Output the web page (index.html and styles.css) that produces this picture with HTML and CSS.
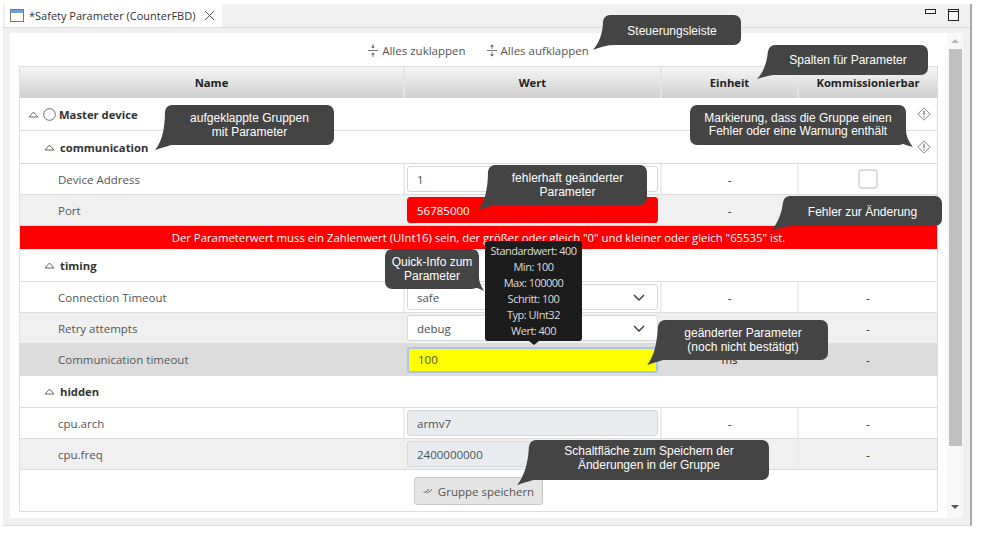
FILE: index.html
```html
<!DOCTYPE html>
<html>
<head>
  <meta charset="utf-8">
  <title>Safety Parameter</title>
  <link rel="stylesheet" href="styles.css">
</head>
<body>
<div class="window">
  <div class="tabbar">
    <div class="tab">
      <svg class="tab-icon" width="14" height="13" viewBox="0 0 14 13"><rect x="0.5" y="0.5" width="13" height="12" fill="#fdfdf6" stroke="#7c7c6c"/><rect x="1" y="1" width="12" height="3" fill="#6f9fd8"/></svg>
      <span>*Safety Parameter (CounterFBD)</span>
      <svg class="tab-close" width="11" height="11" viewBox="0 0 11 11"><path d="M1 1l9 9M10 1l-9 9" stroke="#555" fill="none"/></svg>
    </div>
    <div class="tabbar-tools">
      <svg width="11" height="5" viewBox="0 0 11 5"><rect x="0.5" y="0.5" width="10" height="4" fill="#f8f8f8" stroke="#222"/></svg>
      <svg width="11" height="12" viewBox="0 0 11 12"><rect x="0.5" y="0.5" width="10" height="11" fill="#f8f8f8" stroke="#222"/><path d="M0 2.5h11" stroke="#222"/></svg>
    </div>
  </div>

  <div class="panel">
    <div class="content">
      <div class="toolbar">
        <a class="tool">
          <svg width="10" height="13" viewBox="0 0 10 13"><path d="M0 6.5h10" stroke="#777"/><path d="M5 0v3M5 10v3" stroke="#777"/><path d="M3 2.5l2 2 2-2zM3 10.5l2-2 2 2z" fill="#555"/></svg>
          Alles zuklappen
        </a>
        <a class="tool">
          <svg width="10" height="13" viewBox="0 0 10 13"><path d="M0 6.5h10" stroke="#777"/><path d="M5 2v3M5 8v3" stroke="#777"/><path d="M3 2.5l2-2 2 2zM3 10.5l2 2 2-2z" fill="#555"/></svg>
          Alles aufklappen
        </a>
      </div>

      <div class="params">
        <div class="row header">
          <div class="cell">Name</div>
          <div class="cell">Wert</div>
          <div class="cell">Einheit</div>
          <div class="cell">Kommissionierbar</div>
        </div>

        <div class="group top-group">
          <svg class="caret" width="11" height="7" viewBox="0 0 11 7"><path d="M5.5 1L10 6H1z" fill="none" stroke="#666"/></svg>
          <svg class="radio" width="13" height="13" viewBox="0 0 13 13"><circle cx="6.5" cy="6.5" r="5.8" fill="#fff" stroke="#667"/></svg>
          <b>Master device</b>
          <svg class="warn" width="14" height="14" viewBox="0 0 14 14"><path d="M7 .8L13.2 7 7 13.2 .8 7z" fill="#fff" stroke="#888"/><path d="M7 3.5v4.5M7 9.2v1.3" stroke="#666" stroke-width="1.2"/></svg>
        </div>
        <div class="group">
          <svg class="caret" width="11" height="7" viewBox="0 0 11 7"><path d="M5.5 1L10 6H1z" fill="none" stroke="#666"/></svg>
          <b>communication</b>
          <svg class="warn" width="14" height="14" viewBox="0 0 14 14"><path d="M7 .8L13.2 7 7 13.2 .8 7z" fill="#fff" stroke="#888"/><path d="M7 3.5v4.5M7 9.2v1.3" stroke="#666" stroke-width="1.2"/></svg>
        </div>
        <div class="row">
          <div class="cell name">Device Address</div>
          <div class="cell value"><div class="field">1</div></div>
          <div class="cell">-</div>
          <div class="cell"><span class="checkbox"></span></div>
        </div>
        <div class="row alt">
          <div class="cell name">Port</div>
          <div class="cell value"><div class="field field-error">56785000</div></div>
          <div class="cell">-</div>
          <div class="cell"></div>
        </div>
        <div class="error-row">Der Parameterwert muss ein Zahlenwert (UInt16) sein, der größer oder gleich "0" und kleiner oder gleich "65535" ist.</div>

        <div class="group">
          <svg class="caret" width="11" height="7" viewBox="0 0 11 7"><path d="M5.5 1L10 6H1z" fill="none" stroke="#666"/></svg>
          <b>timing</b>
        </div>
        <div class="row">
          <div class="cell name">Connection Timeout</div>
          <div class="cell value"><div class="field field-select">safe
            <svg width="12" height="7" viewBox="0 0 12 7"><path d="M1 1l5 5 5-5" fill="none" stroke="#444" stroke-width="1.5"/></svg></div></div>
          <div class="cell">-</div>
          <div class="cell">-</div>
        </div>
        <div class="row alt">
          <div class="cell name">Retry attempts</div>
          <div class="cell value"><div class="field field-select">debug
            <svg width="12" height="7" viewBox="0 0 12 7"><path d="M1 1l5 5 5-5" fill="none" stroke="#444" stroke-width="1.5"/></svg></div></div>
          <div class="cell">-</div>
          <div class="cell">-</div>
        </div>
        <div class="row hover">
          <div class="cell name">Communication timeout</div>
          <div class="cell value"><div class="field field-changed">100</div></div>
          <div class="cell">ms</div>
          <div class="cell">-</div>
        </div>

        <div class="group group-short">
          <svg class="caret" width="11" height="7" viewBox="0 0 11 7"><path d="M5.5 1L10 6H1z" fill="none" stroke="#666"/></svg>
          <b>hidden</b>
        </div>
        <div class="row">
          <div class="cell name">cpu.arch</div>
          <div class="cell value"><div class="field field-off">armv7</div></div>
          <div class="cell">-</div>
          <div class="cell">-</div>
        </div>
        <div class="row alt">
          <div class="cell name">cpu.freq</div>
          <div class="cell value"><div class="field field-off">2400000000</div></div>
          <div class="cell">-</div>
          <div class="cell">-</div>
        </div>
        <div class="footer">
          <button class="save">
            <svg width="10" height="6" viewBox="0 0 10 6"><path d="M.5 3l2 2 3-4M4 4.5l.5.5 4.5-3.5" fill="none" stroke="#666"/></svg>
            Gruppe speichern
          </button>
        </div>
      </div>
    </div>

    <div class="scrollbar">
      <span class="arrow-up"></span>
      <div class="thumb"></div>
      <span class="arrow-down"></span>
    </div>
  </div>
</div>

<!-- quick info -->
<div class="quickinfo">
  <div>Standardwert: 400</div>
  <div>Min: 100</div>
  <div>Max: 100000</div>
  <div>Schritt: 100</div>
  <div>Typ: UInt32</div>
  <div>Wert: 400</div>
</div>

<!-- callouts, tail is drawn from the box to the thing it points at -->
<div class="callout c-toolbar">Steuerungsleiste
  <svg class="tail" width="30" height="36" viewBox="0 0 30 36"><path d="M10 6C10 18 6 28 0 35C7 32 14 30 22 30V6z"/></svg></div>
<div class="callout c-columns">Spalten für Parameter
  <svg class="tail" width="30" height="36" viewBox="0 0 30 36"><path d="M11 6C10 18 6 28 0 34C7 32 14 30 22 29V6z"/></svg></div>
<div class="callout c-groups">aufgeklappte Gruppen<br>mit Parameter
  <svg class="tail" width="30" height="46" viewBox="0 0 30 46"><path d="M10 6C10 26 6 38 0 45C7 43 14 40 22 39V6z"/></svg></div>
<div class="callout c-marker">Markierung, dass die Gruppe einen<br>Fehler oder eine Warnung enthält
  <svg class="tail" width="20" height="46" viewBox="0 0 20 46"><path d="M0 25V39H8C11 40 14 41 18 42C15 38 11 32 11 25z"/></svg></div>
<div class="callout c-badvalue">fehlerhaft geänderter<br>Parameter
  <svg class="tail" width="30" height="46" viewBox="0 0 30 46"><path d="M10 6C10 26 6 38 0 45C7 43 14 40 22 40V6z"/></svg></div>
<div class="callout c-error">Fehler zur Änderung
  <svg class="tail" width="30" height="36" viewBox="0 0 30 36"><path d="M12 6C11 18 6 28 0 35C7 33 14 30 22 30V6z"/></svg></div>
<div class="callout c-info">Quick-Info zum<br>Parameter
  <svg class="tail" width="14" height="44" viewBox="0 0 14 44"><path d="M0 28V39H3C6 40 8 41 10 42C8 38 5 34 5 28z"/></svg></div>
<div class="callout c-changed">geänderter Parameter<br>(noch nicht bestätigt)
  <svg class="tail" width="30" height="46" viewBox="0 0 30 46"><path d="M11 6C10 26 6 38 0 45C7 43 14 40 22 39V6z"/></svg></div>
<div class="callout c-save">Schaltfläche zum Speichern der<br>Änderungen in der Gruppe
  <svg class="tail" width="30" height="46" viewBox="0 0 30 46"><path d="M12 6C11 26 6 38 0 45C7 43 14 40 22 39V6z"/></svg></div>
</body>
</html>
```

FILE: styles.css
```css
body {
  margin: 0;
  background: white;
  font-family: "Open Sans", "Liberation Sans", sans-serif;
  font-size: 11.5px;
  color: #444;
}

/* Outer view frame */
.window {
  margin: 4px 0 0 3px;
  width: 967px;
  height: 521px;
  display: flex;
  flex-direction: column;
  background: #f0f0f0;
  border-right: 2px solid #a8a8a8;
  border-bottom: 1px solid #ddd;
}

.tabbar {
  height: 23px;
  display: flex;
  justify-content: space-between;
  border-bottom: 1px solid #ddd;
  padding-left: 2px;
}

.tab {
  width: 217px;
  height: 23px;
  box-sizing: border-box;
  background: white;
  display: flex;
  align-items: center;
  padding-left: 5px;
  color: #333;
  font-size: 11px;
  white-space: nowrap;
}

.tab-icon { margin-right: 5px; }
.tab-close { margin-left: 9px; }

.tabbar-tools {
  display: flex;
  align-items: flex-start;
  gap: 12px;
  padding: 5px 11px 0 0;
}

.panel {
  flex: 1;
  display: flex;
  margin: 5px 7px 7px 7px;
  background: white;
}

.content {
  width: 937px;
  padding-left: 9px;
  box-sizing: border-box;
}

/* Collapse / expand links */
.toolbar {
  width: 919px;
  height: 33px;
  box-sizing: border-box;
  padding-top: 2px;
  display: flex;
  justify-content: center;
  align-items: center;
  gap: 21px;
  color: #555;
}

.tool {
  display: flex;
  align-items: center;
  gap: 4px;
}

.params {
  width: 919px;
  border: 1px solid #ddd;
  box-sizing: border-box;
}

.row {
  display: grid;
  grid-template-columns: 385px 257px 137px 138px;
  height: 31px;
  border-bottom: 1px solid #ddd;
  box-sizing: border-box;
}

.cell {
  display: flex;
  align-items: center;
  justify-content: center;
  border-right: 2px solid #eee;
  color: #222;
}

.cell:last-child { border-right: none; }

.header {
  height: 31px;
  border-bottom: none;
  background: linear-gradient(#f6f6f6, #cfcfcf);
  font-weight: bold;
  font-size: 11.25px;
}

.header .cell { color: #222; border-right-color: #e4e4e4; }

.name {
  justify-content: flex-start;
  padding-left: 38px;
  color: #555;
}

.value {
  padding: 0 2px;
  box-sizing: border-box;
}

.alt { background: #f0f0f0; }
.hover { background: #dcdcdc; height: 32px; border-bottom: none; padding-bottom: 1px; }
.hover .name { color: #555; }
.hover .cell { border-right-color: transparent; }

.group {
  height: 33px;
  box-sizing: border-box;
  display: flex;
  align-items: center;
  padding: 0 6px 0 24px;
  border-bottom: 1px solid #ddd;
  color: #333;
  font-size: 11.25px;
}

.group-short { height: 32px; }
.group .caret { margin-right: 5px; }
.group .warn { margin-left: auto; }
.top-group { padding-left: 8px; }
.top-group .radio { margin-right: 3px; }
.top-group .caret { margin-right: 4px; }

.field {
  width: 100%;
  height: 26px;
  box-sizing: border-box;
  padding: 0 9px;
  display: flex;
  align-items: center;
  border: 1px solid #d3d8dd;
  border-radius: 3px;
  background: white;
  color: #495057;
}

.field-select { justify-content: space-between; padding-right: 12px; }

.field-error {
  background: #ff0000;
  border-color: #ff0000;
  color: white;
}

.field-changed {
  background: #ffff00;
  border: 2px solid #a9c4e8;
  padding-left: 9px;
}

.field-off { background: #e9ecef; }

.checkbox {
  width: 20px;
  height: 20px;
  box-sizing: border-box;
  background: white;
  border: 2px solid #ddd;
  border-radius: 4px;
}

.error-row {
  height: 23px;
  box-sizing: border-box;
  background: #ff0000;
  color: white;
  font-size: 11.35px;
  display: flex;
  align-items: center;
  justify-content: center;
}

.footer {
  height: 41px;
  display: flex;
  justify-content: center;
  padding-top: 7px;
  box-sizing: border-box;
}

.save {
  width: 129px;
  height: 28px;
  display: flex;
  align-items: center;
  justify-content: center;
  gap: 5px;
  font-family: inherit;
  font-size: 11.5px;
  color: #555;
  background: #e4e4e4;
  border: 1px solid #c8c8c8;
  border-radius: 3px;
  padding: 0;
}

.scrollbar {
  flex: 1;
  background: #f8f8f8;
  display: flex;
  flex-direction: column;
  align-items: center;
}

.thumb {
  width: 13px;
  height: 397px;
  margin: 6px 0 0 1px;
  background: #c0c0c0;
}

.arrow-up, .arrow-down {
  width: 0;
  height: 0;
  border-left: 4px solid transparent;
  border-right: 4px solid transparent;
}

.arrow-up { margin-top: 6px; border-bottom: 4px solid #bbb; }
.arrow-down { margin-top: 59px; border-top: 4px solid #555; }

/* Dark tooltip over the value column */
.quickinfo {
  position: absolute;
  left: 485px;
  top: 241px;
  width: 97px;
  height: 100px;
  box-sizing: border-box;
  padding-top: 2px;
  background: #1c1c1c;
  border-radius: 3px;
  color: #ddd;
  font-size: 11px;
  line-height: 16px;
  text-align: center;
  letter-spacing: -0.5px;
}

.quickinfo::after {
  content: "";
  position: absolute;
  left: 44px;
  top: 100px;
  border-left: 5px solid transparent;
  border-right: 5px solid transparent;
  border-top: 4px solid #1c1c1c;
}

/* Annotation callouts */
.callout {
  position: absolute;
  z-index: 1;
  box-sizing: border-box;
  padding-top: 6px;
  background: #444;
  border-radius: 7px;
  color: white;
  font-family: "Liberation Sans", Arial, sans-serif;
  font-size: 12px;
  line-height: 14px;
  text-align: center;
}

.tail {
  position: absolute;
  left: -10px;
  top: 0;
  z-index: -1;
  fill: #444;
}

.c-toolbar { left: 603px; top: 15px; width: 138px; height: 30px; padding-top: 9px; }
.c-columns { left: 768px; top: 45px; width: 160px; height: 30px; padding-top: 8px; }
.c-groups { left: 165px; top: 105px; width: 169px; height: 40px; }
.c-marker { left: 690px; top: 105px; width: 216px; height: 40px; line-height: 13px; padding-top: 7px; }
.c-badvalue { left: 488px; top: 165px; width: 159px; height: 40px; }
.c-error { left: 783px; top: 196px; width: 159px; height: 30px; padding-top: 9px; }
.c-info { left: 385px; top: 249px; width: 94px; height: 40px; }
.c-changed { left: 658px; top: 320px; width: 170px; height: 40px; }
.c-save { left: 529px; top: 440px; width: 240px; height: 40px; padding-top: 4px; }

.c-columns .tail { left: -11px; }
.c-marker .tail { left: 205px; }
.c-info .tail { left: 89px; }
.c-error .tail { left: -12px; }
.c-changed .tail { left: -11px; }
.c-save .tail { left: -12px; }
```
